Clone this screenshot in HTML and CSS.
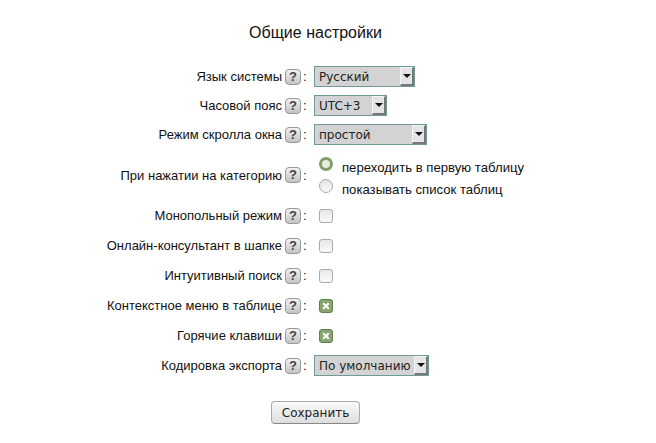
FILE: index.html
```html
<!DOCTYPE html>
<html lang="ru">
<head>
    <meta charset="UTF-8">
    <title>Общие настройки</title>
    <link rel="stylesheet" href="styles.css">
</head>
<body>
    <h1>Общие настройки</h1>
    <div class="form">
        <div class="row">
            <div class="label">Язык системы<span class="help">?</span><span class="colon">:</span></div>
            <div class="select w101"><span class="val">Русский</span><span class="arrow"></span></div>
        </div>
        <div class="row">
            <div class="label">Часовой пояс<span class="help">?</span><span class="colon">:</span></div>
            <div class="select w73"><span class="val">UTC+3</span><span class="arrow"></span></div>
        </div>
        <div class="row">
            <div class="label">Режим скролла окна<span class="help">?</span><span class="colon">:</span></div>
            <div class="select w113"><span class="val">простой</span><span class="arrow"></span></div>
        </div>
        <div class="row row-radio">
            <div class="label">При нажатии на категорию<span class="help">?</span><span class="colon">:</span></div>
            <div class="radios">
                <div class="radio-line"><span class="radio on"></span>переходить в первую таблицу</div>
                <div class="radio-line"><span class="radio"></span>показывать список таблиц</div>
            </div>
        </div>
        <div class="row row-check">
            <div class="label">Монопольный режим<span class="help">?</span><span class="colon">:</span></div>
            <span class="check"></span>
        </div>
        <div class="row row-check">
            <div class="label">Онлайн-консультант в шапке<span class="help">?</span><span class="colon">:</span></div>
            <span class="check"></span>
        </div>
        <div class="row row-check">
            <div class="label">Интуитивный поиск<span class="help">?</span><span class="colon">:</span></div>
            <span class="check"></span>
        </div>
        <div class="row row-check">
            <div class="label">Контекстное меню в таблице<span class="help">?</span><span class="colon">:</span></div>
            <span class="check on"><svg width="8" height="8" viewBox="0 0 8 8"><path d="M1.2 1.2l5.6 5.6M6.8 1.2l-5.6 5.6" stroke="#fff" stroke-width="2"/></svg></span>
        </div>
        <div class="row row-check">
            <div class="label">Горячие клавиши<span class="help">?</span><span class="colon">:</span></div>
            <span class="check on"><svg width="8" height="8" viewBox="0 0 8 8"><path d="M1.2 1.2l5.6 5.6M6.8 1.2l-5.6 5.6" stroke="#fff" stroke-width="2"/></svg></span>
        </div>
        <div class="row row-check">
            <div class="label">Кодировка экспорта<span class="help">?</span><span class="colon">:</span></div>
            <div class="select w115"><span class="val">По умолчанию</span><span class="arrow"></span></div>
        </div>
    </div>
    <div class="btnbox">
        <button class="save">Сохранить</button>
    </div>
</body>
</html>
```

FILE: styles.css
```css
*{
    margin: 0;
    padding: 0;
    box-sizing: border-box;
}
body{
    width: 631px;
    background: #fff;
    color: #111;
    font-family: "Liberation Sans", Arial, sans-serif;
    font-size: 13px;
    padding-top: 24px;
}
h1{
    font-size: 16px;
    font-weight: normal;
    text-align: center;
    line-height: 18px;
    height: 42px;
}
.row{
    display: flex;
    align-items: center;
    height: 21px;
    margin-bottom: 8px;
}
.row-radio{
    height: 45px;
    margin-bottom: 7px;
}
.row-check{
    margin-bottom: 9px;
}
.label{
    width: 306px;
    height: 21px;
    display: flex;
    justify-content: flex-end;
    align-items: center;
    line-height: 19px;
    white-space: pre;
    margin-right: 8px;
}
.row-radio .label{
    margin-top: -1px;
}
.colon{
    margin-left: 2px;
    width: 3px;
}
/* маленькая кнопка подсказки */
.help{
    width: 16px;
    height: 16px;
    margin-left: 3px;
    border: 1px solid #999;
    border-radius: 4px;
    background: linear-gradient(#f2f2f2, #c4c4c4);
    color: #444;
    font-weight: bold;
    font-size: 13px;
    line-height: 14px;
    text-align: center;
}
.select{
    height: 21px;
    display: flex;
    justify-content: space-between;
    background: #d3d3d3;
    border: 1px solid #6f9a9a;
    font-family: "DejaVu Sans", sans-serif;
    font-size: 12px;
    line-height: 20px;
    color: #222;
}
.val{
    padding-left: 4px;
    white-space: nowrap;
}
.w101{ width: 101px; }
.w73{ width: 73px; }
.w113{ width: 113px; }
.w115{ width: 115px; }
.arrow{
    width: 14px;
    height: 19px;
    background: #e4e4e4;
    border-left: 1px solid #f4f4f4;
    border-top: 1px solid #f4f4f4;
    border-right: 2px solid #777;
    border-bottom: 2px solid #777;
    position: relative;
}
.arrow::after{
    content: "";
    position: absolute;
    left: 2px;
    top: 6px;
    border-left: 4px solid transparent;
    border-right: 4px solid transparent;
    border-top: 4px solid #111;
}
.radios{
    margin-left: 5px;
    font-size: 13.15px;
}
.radio-line{
    display: flex;
    align-items: center;
    height: 21px;
    padding-top: 7px;
    margin-bottom: 1px;
}
.radio{
    width: 14px;
    height: 14px;
    border-radius: 50%;
    border: 1px solid #aaa;
    background: linear-gradient(#e2e2e2, #fafafa);
    margin-right: 9px;
    margin-top: -7px;
}
.radio.on{
    border: 3px solid #7f9f68;
    background: #e6ebe0;
}
.check{
    width: 14px;
    height: 14px;
    margin-left: 5px;
    border: 1px solid #aaa;
    border-radius: 3px;
    background: linear-gradient(#e8e8e8, #fafafa);
    display: flex;
    align-items: center;
    justify-content: center;
}
.check.on{
    background: #86a56f;
    border-color: #5f7f4a;
}
.btnbox{
    display: flex;
    justify-content: center;
    margin-top: 25px;
}
.save{
    width: 89px;
    height: 23px;
    font-family: "DejaVu Sans", sans-serif;
    font-size: 12px;
    color: #222;
    background: linear-gradient(#fafafa, #ddd);
    border: 1px solid #aaa;
    border-bottom-color: #888;
    border-radius: 4px;
}
```
